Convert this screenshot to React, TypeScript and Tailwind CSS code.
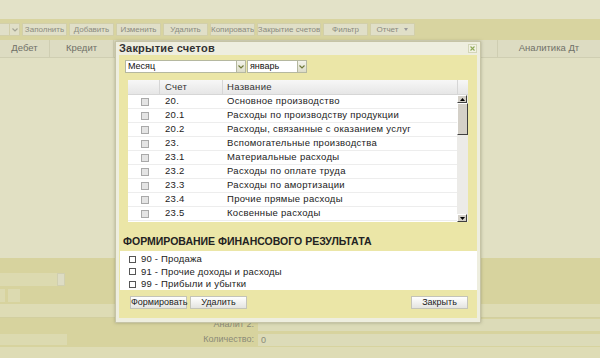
const toolbarButtons = ["Заполнить", "Добавить", "Изменить", "Удалить", "Копировать", "Закрытие счетов", "Фильтр"]

const accounts = [
  { code: "20.", name: "Основное производство" },
  { code: "20.1", name: "Расходы по производству продукции" },
  { code: "20.2", name: "Расходы, связанные с оказанием услуг" },
  { code: "23.", name: "Вспомогательные производства" },
  { code: "23.1", name: "Материальные расходы" },
  { code: "23.2", name: "Расходы по оплате труда" },
  { code: "23.3", name: "Расходы по амортизации" },
  { code: "23.4", name: "Прочие прямые расходы" },
  { code: "23.5", name: "Косвенные расходы" },
]

const results = ["90 - Продажа", "91 - Прочие доходы и расходы", "99 - Прибыли и убытки"]

function Chevron({ className = "" }: { className?: string }) {
  return (
    <svg width="6" height="4" viewBox="0 0 6 4" className={className}>
      <path d="M0.5 0.5 L3 3 L5.5 0.5" fill="none" stroke="currentColor" strokeWidth="1.2" />
    </svg>
  )
}

function ScrollArrow({ up }: { up?: boolean }) {
  return (
    <div className="h-[8px] w-[10px] bg-[#d4d0c8] border border-t-white border-l-white border-r-[#404040] border-b-[#404040] flex items-center justify-center">
      <svg width="5" height="3" viewBox="0 0 5 3">
        <path d={up ? "M0 3 L5 3 L2.5 0 Z" : "M0 0 L5 0 L2.5 3 Z"} fill="#000" />
      </svg>
    </div>
  )
}

function Combo({ value, width }: { value: string; width: string }) {
  return (
    <div className={`flex h-[13px] ${width}`}>
      <div className="flex-1 bg-white border border-[#b5b8a0] pl-[2px] text-[9px] leading-[11px] text-[#111]">
        {value}
      </div>
      <div className="w-[9px] bg-gradient-to-b from-[#f4f4ec] to-[#dcdcc8] border border-l-0 border-[#b5b8a0] flex items-center justify-center text-[#6f7a3a]">
        <Chevron />
      </div>
    </div>
  )
}

function ClosingDialog() {
  return (
    <div className="absolute left-[115px] top-[41px] w-[366px] h-[282px] bg-[#eeeedf] border border-[#c6c4a6] shadow-[0_0_3px_rgba(120,120,90,0.5)] flex flex-col">
      <div className="h-[13px] flex items-center justify-between pl-[3px] pr-[3px]">
        <span className="text-[11px] font-bold text-[#333] leading-none tracking-[0.2px]">Закрытие счетов</span>
        <span className="w-[9px] h-[9px] border border-[#d4d6b8] bg-[#f2f2e4] flex items-center justify-center">
          <svg width="5" height="5" viewBox="0 0 5 5">
            <path d="M0.5 0.5 L4.5 4.5 M4.5 0.5 L0.5 4.5" stroke="#8fa858" strokeWidth="1.1" />
          </svg>
        </span>
      </div>
      <div className="mx-[3px] h-[263px] bg-[#ebe6a7] flex flex-col">
        <div className="flex pl-[6px] pt-[5px] gap-[1px]">
          <Combo value="Месяц" width="w-[121px]" />
          <Combo value="январь" width="w-[60px]" />
        </div>

        <div className="mt-[7px] ml-[9px] w-[340px] h-[142px] bg-white flex flex-col text-[9.5px] tracking-[0.3px] text-[#222]">
          <div className="h-[15px] flex bg-gradient-to-b from-[#f7f7f7] to-[#e6e6e6] border-b border-[#d6d6d6] text-[#333]">
            <div className="w-[32px] border-r border-[#d6d6d6]" />
            <div className="w-[63px] pl-[5px] flex items-center border-r border-[#d6d6d6]">Счет</div>
            <div className="flex-1 pl-[4px] flex items-center">Название</div>
            <div className="w-[11px] border-l border-[#d6d6d6]" />
          </div>
          <div className="flex flex-1">
            <div className="flex-1 flex flex-col">
              {accounts.map((a) => (
                <div key={a.code} className="h-[14px] flex items-center border-b border-[#ededed]">
                  <div className="w-[32px] flex justify-center pl-[2px]">
                    <div className="w-[8px] h-[8px] bg-[#e4e4e4] border border-[#a9a9a9]" />
                  </div>
                  <div className="w-[63px] pl-[5px]">{a.code}</div>
                  <div className="flex-1 pl-[4px] whitespace-nowrap">{a.name}</div>
                </div>
              ))}
            </div>
            <div className="w-[11px] bg-[#ecebe8] flex flex-col">
              <ScrollArrow up />
              <div className="h-[32px] bg-[#d4d0c8] border border-t-white border-l-white border-r-[#404040] border-b-[#404040]" />
              <div className="flex-1" />
              <ScrollArrow />
            </div>
          </div>
        </div>

        <div className="pl-[4px] pt-[13px] h-[29px] text-[10.5px] font-bold text-[#222] leading-[12px]">
          ФОРМИРОВАНИЕ ФИНАНСОВОГО РЕЗУЛЬТАТА
        </div>
        <div className="ml-[1px] h-[39px] bg-white flex flex-col pl-[9px] pt-[2px] text-[9.5px] tracking-[0.2px] text-[#222]">
          {results.map((r) => (
            <div key={r} className="h-[12.5px] flex items-center gap-[5px]">
              <div className="w-[7px] h-[7px] border border-[#555] bg-white" />
              <span>{r}</span>
            </div>
          ))}
        </div>
        <div className="flex items-center pl-[11px] pr-[9px] pt-[6px] text-[9px] text-[#222]">
          <button className="w-[57px] h-[13px] bg-gradient-to-b from-white to-[#e4e4e0] border border-[#c4c4b8] leading-[11px]">Формировать</button>
          <button className="ml-[3px] w-[57px] h-[13px] bg-gradient-to-b from-white to-[#e4e4e0] border border-[#c4c4b8] leading-[11px]">Удалить</button>
          <button className="ml-auto w-[57px] h-[13px] bg-gradient-to-b from-white to-[#e4e4e0] border border-[#c4c4b8] leading-[11px]">Закрыть</button>
        </div>
      </div>
    </div>
  )
}

export default function App() {
  return (
    <div className="relative w-[600px] h-[358px] overflow-hidden bg-[#e2e1c5] font-['Liberation_Sans',Arial,sans-serif]">
      <div className="flex flex-col h-full">
        <div className="h-[19px] bg-[#e3e2c8]" />
        <div className="h-[21px] bg-[#d8d4a0] flex items-center gap-[2px] text-[8px] text-[#8b8b80] whitespace-nowrap">
          <div className="flex h-[13px] w-[20px]">
            <div className="w-[10px] bg-[#e0dfc8] border border-l-0 border-[#d2cfaa]" />
            <div className="w-[10px] bg-[#e0dfc8] border border-l-0 border-[#d2cfaa] flex items-center justify-center text-[#a4a494]">
              <Chevron />
            </div>
          </div>
          {toolbarButtons.map((b) => (
            <div key={b} className={`h-[13px] flex items-center justify-center overflow-hidden bg-[#e0dfc8] border border-[#d2cfaa] ${b === "Закрытие счетов" ? "w-[64px]" : "w-[45px]"}`}>
              {b}
            </div>
          ))}
          <div className="w-[45px] h-[13px] flex items-center justify-center gap-[6px] bg-[#e0dfc8] border border-[#d2cfaa]">
            Отчет
            <svg width="4" height="3" viewBox="0 0 4 3">
              <path d="M0 0 L4 0 L2 3 Z" fill="#999" />
            </svg>
          </div>
        </div>
        <div className="h-[18px] bg-[#dddcc2] border-b border-[#cfceb2] flex text-[9.5px] text-[#707068]">
          <div className="w-[50px] border-r border-[#cfceb2] flex items-center justify-center">Дебет</div>
          <div className="w-[64px] border-r border-[#cfceb2] flex items-center justify-center">Кредит</div>
          <div className="flex-1" />
          <div className="w-[103px] border-l border-[#cfceb2] flex items-center justify-center">Аналитика Дт</div>
        </div>
        <div className="h-[200px] bg-[#e1e0c3]" />
        <div className="flex-1 bg-[#d7d39e] flex flex-col text-[9px] text-[#8a8a78]">
          <div className="h-[14px]" />
          <div className="h-[14px] flex items-center">
            <div className="w-[57px] h-[13px] bg-[#dcdab0]" />
            <div className="w-[8px] h-[13px] bg-[#dddcc4] border border-[#d0cfb0]" />
          </div>
          <div className="h-[16px] flex items-center gap-[3px] mt-[1px]">
            <div className="w-[5px] h-[13px] bg-[#dcdab0]" />
            <div className="w-[12px] h-[13px] bg-[#dcdab0]" />
          </div>
          <div className="h-[13px] mt-[1px] bg-[#dedcb5]" />
          <div className="h-[15px] flex items-center border-t border-[#d2cfa0]">
            <div className="w-[258px] text-right pr-[4px]">Аналит 2:</div>
            <div className="flex-1 h-[12px] bg-[#dcdbb8]" />
          </div>
          <div className="h-[15px] flex items-center">
            <div className="w-[67px] h-[11px] bg-[#dcdab0]" />
            <div className="w-[191px] text-right pr-[4px]">Количество:</div>
            <div className="flex-1 h-[12px] bg-[#dcdbb8] pl-[3px] leading-[12px]">0</div>
          </div>
          <div className="flex-1 bg-[#dedcb5]" />
        </div>
      </div>
      <ClosingDialog />
    </div>
  )
}
